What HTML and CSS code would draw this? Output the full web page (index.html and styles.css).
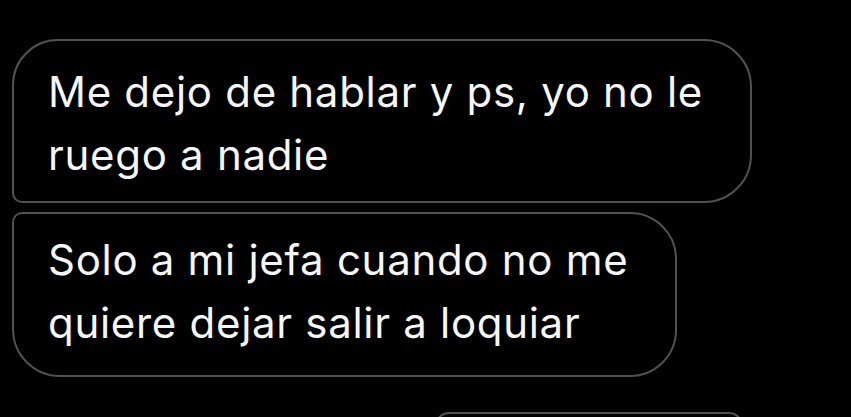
FILE: index.html
```html
<!DOCTYPE html>
<html lang="es">
<head>
<meta charset="utf-8">
<title>Mensajes</title>
<link rel="stylesheet" href="styles.css">
</head>
<body>
<div class="thread">
  <div class="bubble bubble-first">
    <p class="text">Me dejo de hablar y ps, yo no le<br>ruego a nadie</p>
  </div>
  <div class="bubble bubble-second">
    <p class="text">Solo a mi jefa cuando no me<br>quiere dejar salir a loquiar</p>
  </div>
  <div class="bubble bubble-next"></div>
</div>
</body>
</html>
```
FILE: styles.css
```css
html, body {
  margin: 0;
  padding: 0;
  background: #000;
}

.thread {
  box-sizing: border-box;
  height: 417px;
  overflow: hidden;
  display: flex;
  flex-direction: column;
  align-items: flex-start;
  padding: 39px 0 0 12px;
}

.bubble {
  box-sizing: border-box;
  flex-shrink: 0;
  border: 2px solid #515151;
  background: #010101;
  padding-left: 34px;
}

.text {
  margin: 0;
  color: #f6f6f6;
  font-family: Inter, "Liberation Sans", sans-serif;
  font-size: 42px;
  letter-spacing: 0.7px;
  line-height: 63px;
  white-space: nowrap;
}

.bubble-first {
  width: 740px;
  height: 164px;
  padding-top: 19px;
  border-radius: 46px 48px 48px 10px;
}

.bubble-second {
  width: 665px;
  height: 165px;
  margin-top: 9px;
  padding-top: 14px;
  border-radius: 10px 47px 47px 48px;
}

.bubble-next {
  width: 308px;
  height: 40px;
  margin-top: 35px;
  margin-left: 423px;
  border-radius: 14px 14px 0 0;
}
```
